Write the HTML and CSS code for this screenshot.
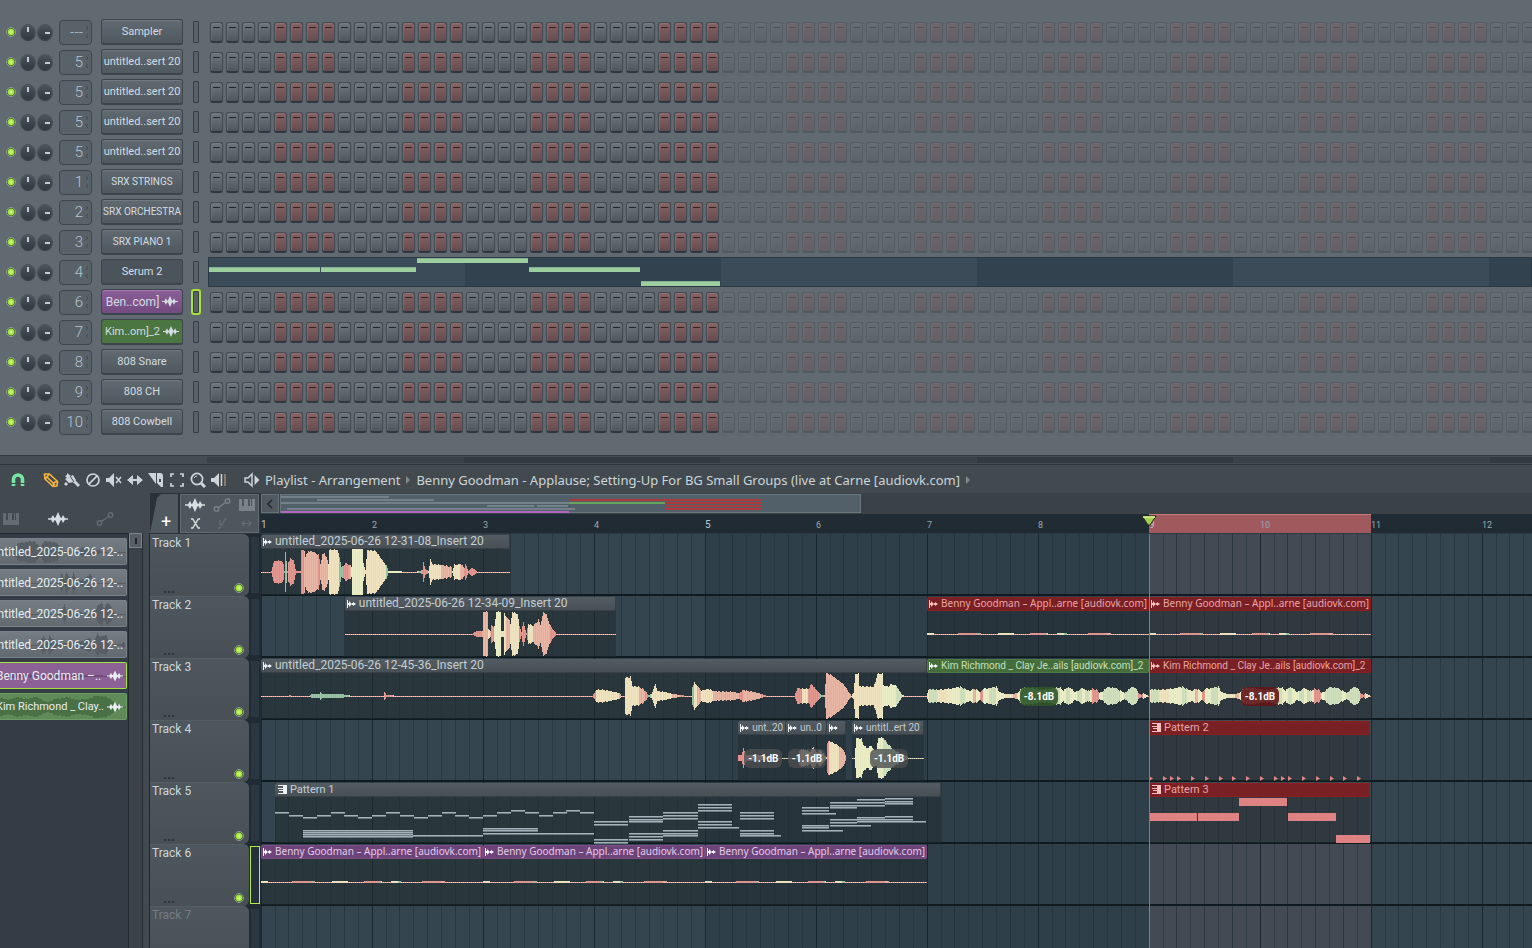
FILE: index.html
```html
<!DOCTYPE html>
<html lang="en">
<head>
    <meta charset="UTF-8">
    <meta name="viewport" content="width=device-width, initial-scale=1.0">
    <title>Playlist - Arrangement</title>
    <link rel="stylesheet" href="styles.css">
</head>
<body>

<svg class="symbols" xmlns="http://www.w3.org/2000/svg">
  <symbol id="i-wave" viewBox="0 0 20 14"><path d="M0 6.300h3l2-3.300 1.500 3 1-.500L10 0l2.500 5.500 1 .500L15 3l2 3.300h3v1.400h-3L15 11l-1.500-3-1 .500L10 14 7.500 8.500l-1-.500L5 11 3 7.700H0z" fill="currentColor"/></symbol>
  <symbol id="i-auto" viewBox="0 0 18 14"><g fill="none" stroke="currentColor" stroke-width="1.400"><circle cx="3.500" cy="11" r="2.300"/><circle cx="14.500" cy="3" r="2.300"/><path d="M5.500 9.500l7-5"/></g></symbol>
  <symbol id="i-keys" viewBox="0 0 16 12"><path d="M0 0h3v7h2V0h1v7h0V0h3v7h2V0h1v7h1V0h3v12H0z" fill="currentColor"/></symbol>
  <symbol id="i-magnet" viewBox="0 0 16 16"><path d="M3.500 14V7.500a4.500 4.500 0 0 1 9 0V14" fill="none" stroke="currentColor" stroke-width="3.600"/><path d="M1 11.500h5M10 11.500h5" stroke="#424a4f" stroke-width="1"/></symbol>
  <symbol id="i-pencil" viewBox="0 0 16 16"><g fill="none" stroke="currentColor" stroke-width="1.700" stroke-linejoin="round"><path d="M1.500 2l5 0 8 7.500-.5 4.500-4 .5L2 7z"/><path d="M2 7l4.500-5M4 5l8 8M10 14.500l1-4 3.500-1"/></g></symbol>
  <symbol id="i-brush" viewBox="0 0 16 16"><path d="M3 1l4 3 2-1 3 5-2 2-5 1-4-4 2-1-2-2 2-1z" fill="currentColor"/><path d="M10 9l5 5M3 11l-2 2" stroke="currentColor" stroke-width="3"/><path d="M6 4l4 6" stroke="#424a4f"/></symbol>
  <symbol id="i-no" viewBox="0 0 16 16"><g fill="none" stroke="currentColor" stroke-width="1.700"><circle cx="8" cy="8" r="6"/><path d="M3.800 12.200l8.400-8.400"/></g></symbol>
  <symbol id="i-mute" viewBox="0 0 16 16"><path d="M0 6h3l5-5v14L3 10H0z" fill="currentColor"/><path d="M10 5l5 6M15 5l-5 6" stroke="currentColor" stroke-width="1.500"/></symbol>
  <symbol id="i-slip" viewBox="0 0 16 16"><path d="M0 8l6-5v4h4V3l6 5-6 5V9H6v4z" fill="currentColor"/></symbol>
  <symbol id="i-slice" viewBox="0 0 16 16"><path d="M0 1h8v11z" fill="currentColor"/><path d="M9 1h3q3 0 3 3v11h-2L9 11z" fill="currentColor"/><path d="M12 7v3" stroke="#424a4f" stroke-width="2"/></symbol>
  <symbol id="i-select" viewBox="0 0 16 16"><path d="M2 5V2h3M11 2h3v3M14 11v3h-3M5 14H2v-3" fill="none" stroke="currentColor" stroke-width="1.700"/></symbol>
  <symbol id="i-zoom" viewBox="0 0 16 16"><g fill="none" stroke="currentColor" stroke-width="1.700"><circle cx="7" cy="7" r="5.600"/><path d="M11 11l4 4" stroke-width="3"/><path d="M4 6q1-2 3-2" stroke-width="1"/></g></symbol>
  <symbol id="i-scrub" viewBox="0 0 16 16"><path d="M0 6h3l5-5v14L3 10H0z" fill="currentColor"/><path d="M10.500 2v12" stroke="currentColor" stroke-width="1.500"/><path d="M14 2v12" stroke="#a98a7b" stroke-width="1.500"/></symbol>
  <symbol id="i-speaker" viewBox="0 0 16 16"><path d="M1 6h3l4-4v12l-4-4H1z" fill="none" stroke="currentColor" stroke-width="1.500"/><path d="M10.500 3l5 5-5 5z" fill="currentColor"/></symbol>
  <symbol id="i-cross" viewBox="0 0 12 12"><path d="M1 1h2l6 10h2M11 1H9L3 11H1" fill="none" stroke="currentColor" stroke-width="1.600"/></symbol>
  <symbol id="i-curve" viewBox="0 0 12 12"><path d="M1 11h2L9 1h2M3 2v5h4" fill="none" stroke="currentColor" stroke-width="1.200"/></symbol>
  <symbol id="i-stretch" viewBox="0 0 12 12"><path d="M4 3L1 6l3 3M8 3l3 3-3 3M2 6h8" fill="none" stroke="currentColor" stroke-width="1.200"/></symbol>
  <symbol id="i-clip" viewBox="0 0 9 8"><path d="M0 0h1v8H0zM1 3h1V1l3 3-3 3V5H1zM5 3h1V2l3 2-3 2V5H5z" fill="currentColor"/></symbol>
  <symbol id="i-pattern" viewBox="0 0 9 9"><path d="M0 0h9v9H0V8h5V6H1V5h4V4H0V3h5V1H0z" fill="currentColor"/></symbol>
</svg>

<div class="app">
  <section class="rack" id="rack"></section>
  <div class="rack-scroll"><i></i></div>

  <section class="playlist">
    <header class="toolbar">
      <button class="tool magnet" aria-label="Snap"><svg><use href="#i-magnet"/></svg></button>
      <span class="sep"></span>
      <button class="tool pencil" aria-label="Draw"><svg><use href="#i-pencil"/></svg></button>
      <button class="tool" aria-label="Paint"><svg><use href="#i-brush"/></svg></button>
      <button class="tool" aria-label="Delete"><svg><use href="#i-no"/></svg></button>
      <button class="tool" aria-label="Mute"><svg><use href="#i-mute"/></svg></button>
      <button class="tool" aria-label="Slip"><svg><use href="#i-slip"/></svg></button>
      <button class="tool" aria-label="Slice"><svg><use href="#i-slice"/></svg></button>
      <button class="tool" aria-label="Select"><svg><use href="#i-select"/></svg></button>
      <button class="tool" aria-label="Zoom"><svg><use href="#i-zoom"/></svg></button>
      <button class="tool" aria-label="Playback"><svg><use href="#i-scrub"/></svg></button>
      <span class="sep"></span>
      <button class="tool" aria-label="Preview"><svg><use href="#i-speaker"/></svg></button>
      <span class="crumb">Playlist - Arrangement</span>
      <span class="arrow"></span>
      <span class="crumb">Benny Goodman - Applause; Setting-Up For BG Small Groups (live at Carne [audiovk.com]</span>
      <span class="arrow"></span>
    </header>

    <div class="columns">
      <aside class="picker">
        <nav class="picker-tabs">
          <button aria-label="Patterns"><svg class="keys"><use href="#i-keys"/></svg></button>
          <button class="on" aria-label="Audio"><svg><use href="#i-wave"/></svg></button>
          <button aria-label="Automation"><svg><use href="#i-auto"/></svg></button>
        </nav>
        <div class="picker-body">
          <div class="picker-list" id="picker"></div>
          <div class="picker-scroll"><button aria-label="Scroll"><i></i></button></div>
        </div>
      </aside>

      <div class="heads">
        <div class="heads-top">
          <button class="add" aria-label="Add track">+</button>
          <div class="modes">
            <button class="on" aria-label="Audio clips"><svg><use href="#i-wave"/></svg></button>
            <button aria-label="Automation clips"><svg><use href="#i-auto"/></svg></button>
            <button aria-label="Pattern clips"><svg class="keys"><use href="#i-keys"/></svg></button>
            <button class="on" aria-label="Crossfade"><svg class="small"><use href="#i-cross"/></svg></button>
            <button class="off" aria-label="Curve"><svg class="small"><use href="#i-curve"/></svg></button>
            <button class="off" aria-label="Stretch"><svg class="small"><use href="#i-stretch"/></svg></button>
          </div>
        </div>
        <div id="heads"></div>
      </div>

      <div class="timeline">
        <div class="overview">
          <button class="back" aria-label="Back"><svg viewBox="0 0 8 10"><path d="M6 1L2 5l4 4" fill="none" stroke="currentColor" stroke-width="1.500"/></svg></button>
          <div class="minimap" id="minimap"></div>
        </div>
        <div class="ruler">
          <div class="range"></div>
          <div class="bars" id="bars"></div>
          <svg class="marker" viewBox="0 0 16 11"><path d="M1 1h14l-6 9H7z" fill="#a5cf52" stroke="#1c2a10"/><path d="M2 2h12" stroke="#dcf59a" stroke-width="1.500"/></svg>
        </div>
        <div class="lanes" id="lanes"></div>
      </div>
    </div>
  </section>
</div>

<script src="script.js"></script>
</body>
</html>
```

FILE: styles.css
```css
*{
  box-sizing:border-box;
}
body{
  margin:0;
  background:#424a4f;
  color:#d3dce2;
  font-family:Roboto,"Liberation Sans",sans-serif;
  font-size:11px;
  overflow:hidden;
}
button,input{
  margin:0;
  padding:0;
  border:0;
  background:none;
  color:inherit;
  font:inherit;
  appearance:none;
}
svg{
  display:block;
}
.symbols{
  display:none;
}
.app{
  --bar:111px;
  display:flex;
  flex-direction:column;
  height:100vh;
}

/* channel rack */
.rack{
  flex:none;
  padding:17px 0 18px;
  background:#626a71;
  overflow:hidden;
}
.channel{
  display:flex;
  align-items:center;
  height:30px;
  padding-left:6px;
}
.led{
  flex:none;
  width:10px;
  height:10px;
  border:1px solid #90999d;
  border-radius:50%;
  background:radial-gradient(circle,#c6f570 0 1px,#98dc35 3px,#2c4a18 4px);
}
.knob{
  flex:none;
  width:14px;
  height:15px;
  margin-left:5px;
  border-radius:50%;
  background:linear-gradient(#c4cbcf,#c4cbcf) 6px 2px/2px 5px no-repeat,linear-gradient(#4b545c,#30383f);
  box-shadow:0 1px 1px #353d44,0 0 0 1px #4c555c;
}
.knob::-webkit-slider-thumb{
  appearance:none;
  width:1px;
  height:1px;
  background:none;
}
.knob + .knob{
  margin-left:3px;
  background:linear-gradient(#c4cbcf,#c4cbcf) 7px 7px/5px 2px no-repeat,linear-gradient(#4b545c,#30383f);
}
.insert{
  display:flex;
  align-items:center;
  flex:none;
  width:33px;
  height:25px;
  margin-left:7px;
  border:1px solid #3d464c;
  border-radius:4px;
  background:#5a6269;
}
.insert input{
  width:23px;
  text-align:right;
  color:#b3c6d2;
  font-size:15px;
  font-weight:300;
}
.insert svg{
  margin-left:2px;
  width:4px;
  height:12px;
  color:#424a50;
}
.name{
  display:flex;
  align-items:center;
  justify-content:center;
  gap:3px;
  flex:none;
  width:82px;
  height:26px;
  margin-left:9px;
  border:1px solid #3c454b;
  border-bottom-width:2px;
  border-radius:3px;
  background:linear-gradient(#616a70,#50595f);
  box-shadow:inset 0 1px #717a80;
  white-space:nowrap;
  font-size:11px;
}
.name svg{
  width:16px;
  height:13px;
}
.name.long{
  font-size:10px;
}
.name.pressed{
  background:#4c545b;
  box-shadow:none;
}
.name.purple{
  background:linear-gradient(#8b5f97,#734b80);
  box-shadow:inset 0 1px #a77bb2;
  font-size:12px;
}
.name.green{
  background:#4b7541;
  box-shadow:none;
}
.pick{
  flex:none;
  width:6px;
  height:22px;
  margin:0 9px 0 10px;
  border:1px solid #363f46;
  border-radius:1px;
  background:#596168;
}
.pick.on{
  outline:2px solid #a6e237;
  outline-offset:0;
}
.steps{
  display:flex;
  flex:1;
  gap:3px;
  padding-left:2px;
  min-width:0;
  overflow:hidden;
}
.step{
  flex:none;
  width:13px;
  height:21px;
  border:1px solid #414a51;
  border-bottom:2px solid #2e373e;
  border-radius:3px;
  background:linear-gradient(#1e262b,#1e262b) 2px 4px/7px 1px no-repeat,linear-gradient(#6e777d,#4e575e);
  box-shadow:inset 1px 1px #79828777,0 0 1px #454e54;
}
.step.red{
  background:linear-gradient(#351f22,#351f22) 2px 4px/7px 1px no-repeat,linear-gradient(#886365,#654b4e);
  box-shadow:inset 1px 1px #a6797a77,0 0 1px #454e54;
}
.step.dim{
  opacity:.33;
}
.roll{
  flex:1;
  position:relative;
  height:30px;
  border:1px solid #2a3943;
  background:repeating-linear-gradient(90deg,#3b4b57 0 256px,#32434f 256px 512px);
}
.roll i{
  position:absolute;
  height:5px;
  background:#9ccea0;
  border-top:1px solid #86b38f;
}
.rack-scroll{
  flex:none;
  height:10px;
  padding:1px 0 2px 207px;
  border-top:1px solid #343b41;
  border-bottom:1px solid #2d3439;
  background:#464d52;
}
.rack-scroll i{
  display:block;
  height:6px;
  background:repeating-linear-gradient(90deg,#3a4147 0 257px,#333a40 257px 513px);
}

/* playlist */
.playlist{
  flex:1;
  display:flex;
  flex-direction:column;
  min-height:0;
}
.toolbar{
  display:flex;
  align-items:center;
  flex:none;
  height:28px;
  padding:2px 0 0 7px;
  background:#424a4f;
  white-space:nowrap;
}
.tool{
  display:flex;
  justify-content:center;
  flex:none;
  width:21px;
  color:#cdd5da;
}
.tool svg{
  width:16px;
  height:16px;
}
.magnet{
  color:#78e6a3;
}
.pencil{
  color:#f2b340;
}
.sep{
  flex:none;
  width:12px;
}
.crumb{
  padding-left:3px;
  font-family:"Noto Sans","Open Sans",sans-serif;
  font-size:13px;
  line-height:18px;
  color:#ccd5da;
}
.arrow{
  margin:0 3px 0 6px;
  border:4px solid transparent;
  border-left-color:#7e888e;
  border-right:0;
}
.columns{
  flex:1;
  display:grid;
  grid-template-columns:150px 111px minmax(0,1fr);
  grid-template-rows:minmax(0,1fr);
}
.picker,.heads,.timeline{
  display:flex;
  flex-direction:column;
  min-height:0;
  overflow:hidden;
}
.picker-tabs{
  display:flex;
  align-items:center;
  flex:none;
  gap:26px;
  height:40px;
  padding:12px 0 0 1px;
  color:#646c71;
}
.picker-tabs svg,.modes svg{
  width:20px;
  height:14px;
}
.picker-tabs .on,.modes .on{
  color:#d7dee2;
}
.picker-tabs .keys,.modes .keys{
  width:16px;
  height:12px;
}
.picker-tabs .keys{
  margin-left:2px;
}
.picker-tabs button{
  width:21px;
}
.picker-body{
  flex:1;
  display:flex;
  padding-right:6px;
  border-right:1px solid #20272c;
}
.picker-list{
  flex:1;
  display:flex;
  flex-direction:column;
  gap:4px;
  min-width:0;
  padding:4px 1px 0 0;
  background:#343d46;
  border-top:1px solid #20272c;
}
.sample{
  position:relative;
  display:flex;
  align-items:center;
  height:27px;
  padding:0 3px 0 0;
  border:1px solid #7a8389;
  border-left:0;
  border-radius:0 2px 2px 0;
  background:linear-gradient(#747d83,#626a70);
  color:#e9eef0;
  font-size:12px;
  white-space:nowrap;
  overflow:hidden;
}
.sample .wave{
  position:absolute;
  left:0;
  top:1px;
}
.sample span{
  position:relative;
  flex:1;
  margin-left:-9px;
}
.sample .icon{
  position:relative;
  flex:none;
  width:16px;
  height:14px;
}
.sample.purple{
  background:#8b6196;
  border-color:#a8e23c;
}
.sample.green{
  background:#5f8b59;
  border-color:#6f9b68;
}
.sample.purple span,.sample.green span{
  margin-left:-4px;
}
.sample.green span{
  font-size:11px;
}
.picker-scroll{
  width:15px;
  border-left:1px solid #252c31;
  border-right:1px solid #252c31;
  background:#3b4248;
}
.picker-scroll button{
  display:flex;
  align-items:center;
  justify-content:center;
  width:13px;
  height:15px;
  border:1px solid #7b848a;
  background:#565f65;
}
.picker-scroll i{
  width:2px;
  height:6px;
  background:#20272c;
}

.heads{
  background:#202b33;
}
.heads-top{
  display:flex;
  gap:2px;
  flex:none;
  height:41px;
  padding:1px 2px 1px 0;
  background:#2b3237;
}
.add{
  width:28px;
  padding-top:16px;
  padding-left:4px;
  background:#515a60;
  clip-path:polygon(11px 0,100% 0,100% 100%,0 100%,7px 4px);
  font-size:18px;
  line-height:20px;
  color:#fff;
}
.modes{
  flex:1;
  display:grid;
  grid-template-columns:28px 26px 1fr;
  border:1px solid #646d73;
  background:#4e575d;
  color:#798288;
}
.modes button{
  display:flex;
  align-items:center;
  justify-content:center;
}
.modes .small{
  width:11px;
  height:11px;
}
.modes .off{
  color:#636c72;
}
.track{
  display:flex;
  height:62px;
}
.head{
  display:grid;
  grid-template-columns:1fr auto;
  align-content:space-between;
  width:99px;
  padding:1px 5px 3px 2px;
  border-top:1px solid #555e64;
  border-radius:0 6px 6px 0;
  background:linear-gradient(#4e575d,#485056);
  font-size:12px;
  line-height:14px;
  color:#ccd5da;
}
.head b{
  grid-column:1/3;
  font-weight:400;
}
.head small{
  align-self:end;
  padding-left:11px;
  color:#2b3338;
  font-size:14px;
  font-weight:700;
  line-height:10px;
}
.head.off{
  color:#737c82;
}
.gutter{
  flex:1;
  margin:2px 1px;
  border:1px solid #202b33;
  background:#2a3740;
}
.gutter.on{
  border-color:#b4ea50;
  background:#25313a;
}

.overview{
  display:flex;
  flex:none;
  height:21px;
  padding:1px 0;
  background:#3a4147;
}
.back{
  width:18px;
  border:1px solid #69737a;
  background:#4f595f;
  color:#1f262b;
}
.back svg{
  width:8px;
  height:10px;
  margin:auto;
}
.minimap{
  position:relative;
  width:581px;
  margin-left:1px;
  border:1px solid #6a767e;
  background:#52606a;
}
.minimap i{
  position:absolute;
  height:2px;
  background:#75818a;
}
.minimap .red{
  background:#ac3a3c;
}
.minimap .green{
  background:#69a35b;
}
.minimap .purple{
  background:#b567c4;
}
.ruler{
  position:relative;
  flex:none;
  height:20px;
  background:linear-gradient(#212d36,#1f2a32);
  border-bottom:1px solid #2d3a43;
}
.bars{
  position:relative;
  display:flex;
  padding-top:4px;
}
.bars span{
  flex:none;
  width:var(--bar);
  font-size:9px;
  line-height:14px;
  color:#9aa8b2;
}
.bars .big{
  font-size:10px;
  color:#bcc8d0;
}
.range{
  position:absolute;
  top:0;
  bottom:0;
  left:calc(var(--bar)*8);
  width:calc(var(--bar)*2);
  border-top:1px solid #c9787b;
  background:#a0595d;
}
.marker{
  position:absolute;
  left:calc(var(--bar)*8 - 8px);
  top:1px;
  width:16px;
  height:11px;
}
.lanes{
  flex:1;
  position:relative;
  overflow:hidden;
  background:repeating-linear-gradient(90deg,#34454f 0 calc(var(--bar)*4),#2f3f4a calc(var(--bar)*4) calc(var(--bar)*8));
}
.lanes::before{
  content:"";
  position:absolute;
  top:0;
  bottom:0;
  left:calc(var(--bar)*8);
  width:calc(var(--bar)*2);
  background:#444a53;
}
.lane{
  position:relative;
  height:62px;
  border-bottom:2px solid #0f1a21;
  background:linear-gradient(90deg,#141f27cc 1px,transparent 1px 14px,#22303a88 14px 15px,transparent 15px 27px,#1d2a3399 27px 28px,transparent 28px 41px,#22303a88 41px 42px,transparent 42px 55px,#1d2a3399 55px 56px,transparent 56px 69px,#22303a88 69px 70px,transparent 70px 83px,#1d2a3399 83px 84px,transparent 84px 97px,#22303a88 97px 98px,transparent 98px) 0 0/var(--bar) 100%;
}
.playhead{
  position:absolute;
  top:0;
  bottom:0;
  left:calc(var(--bar)*8);
  width:1px;
  background:#71858f;
}
.clip{
  position:absolute;
  top:1px;
  bottom:-1px;
  left:calc(var(--at)*var(--bar));
  width:calc(var(--len)*var(--bar));
  background:#202b308c;
}
.clip header{
  display:flex;
  align-items:center;
  gap:3px;
  height:14px;
  padding:0 0 1px 2px;
  border-radius:2px;
  background:linear-gradient(#535c62,#474f55);
  box-shadow:inset -1px -1px #394147;
  color:#c5ced4;
  font-size:12px;
  line-height:13px;
  white-space:nowrap;
  overflow:hidden;
}
.clip header svg{
  flex:none;
  width:9px;
  height:8px;
  color:#eef3f5;
}
.clip.short header{
  font-size:11px;
}
.clip.narrow header{
  font-size:10px;
}
.clip.wide header{
  font-family:"Noto Sans","Open Sans",sans-serif;
  font-size:10px;
}
.clip.pattern header{
  padding-left:3px;
  font-size:11px;
}
.clip.pattern header svg{
  height:9px;
}
.clip.red header{
  background:#792024;
  box-shadow:inset 0 0 0 1px #8c1d21;
  color:#e9a5a5;
}
.clip.red header svg{
  color:#f6c0bd;
}
.clip.green header{
  background:#456d3c;
  box-shadow:inset 0 0 0 1px #4e7b43;
  color:#c5e0bd;
}
.clip.purple header{
  background:#6d4379;
  box-shadow:inset 0 0 0 1px #7b4d87;
  color:#e2cbe7;
}
.db{
  position:absolute;
  top:28px;
  width:38px;
  border-radius:6px;
  background:#4b4d50cc;
  font:bold 10px/19px Roboto,"Liberation Sans",sans-serif;
  text-align:center;
  color:#fff;
}
.green .db{
  background:#2f5529e6;
}
.red .db{
  background:#611619e6;
}
```

FILE: script.js
```js
const BAR = 111;

// name, insert number, button class
const channels = [
  ["Sampler", "---", ""],
  ["untitled..sert 20", 5, ""],
  ["untitled..sert 20", 5, ""],
  ["untitled..sert 20", 5, ""],
  ["untitled..sert 20", 5, ""],
  ["SRX STRINGS", 1, "long"],
  ["SRX ORCHESTRA", 2, "long"],
  ["SRX PIANO 1", 3, "long"],
  ["Serum 2", 4, "pressed"],
  ["Ben..com]", 6, "purple"],
  ["Kim..om]_2", 7, "green"],
  ["808 Snare", 8, ""],
  ["808 CH", 9, ""],
  ["808 Cowbell", 10, ""]
];

// left, width, top of the notes in the Serum 2 roll
const roll = [[0,111,9],[112,95,9],[208,111,0],[320,111,9],[432,79,23]];

const colours = {
  r:["#dd8c89","#e49a93","#d87f80"],
  p:["#e5ab9f","#e8b7a6","#dfa096"],
  c:["#eddcb8","#efe3bf","#e9cdae"],
  y:["#e6e9bf","#eaedc6","#e0e4b8"],
  g:["#8fb9a1","#9cc4a9","#86b09a"],
  l:["#c5dbb9","#d0e0bd","#b9d3b5"]
};

// each point is x,half height,colour until the next point
const waves = {
  a:"10,1,r 12,9,r 14,11,r 20,11,r 22,8,r 23,1,g 24,20,g 26,1,r 27,10,r 29,13,r 32,12,r 34,3,r 35,1,r 39,1,r 40,22,r 43,21,p 44,15,p 47,21,p 52,20,p 57,17,r 59,8,p 61,17,p 63,19,p 66,12,p 67,8,c 68,22,c 76,22,c 78,15,g 80,5,g 82,6,r 84,9,r 88,7,p 90,5,y 91,24,y 101,23,y 102,9,c 104,2,c 106,22,c 114,21,c 120,13,c 125,6,g 127,1,y 154,0,g 158,1,g 161,2,r 162,10,r 164,3,r 167,1,c 169,12,c 171,8,c 180,7,p 190,5,r 191,1,c 193,7,c 199,8,p 203,4,r 204,8,r 206,3,p 207,1,r 210,4,r 214,2,r 216,0,r",
  b:"127,0,r 129,2,r 133,3,r 137,3,p 138,22,p 142,22,p 143,5,c 145,3,p 146,9,r 149,7,y 151,22,y 155,22,y 156,3,c 158,3,c 159,21,c 161,16,p 164,14,p 165,9,c 167,22,c 172,20,c 174,8,r 176,2,r 178,12,r 180,4,r 181,1,r 183,10,c 188,8,p 193,14,p 195,9,p 198,22,p 201,19,p 205,8,r 209,3,r 211,0,r",
  c:"28,1,g 30,0,g 48,0,g 50,2,g 58,2,g 59,4,g 61,2,g 78,2,g 86,1,g 90,0,g 122,0,r 123,4,r 125,1,r 131,1,r 133,0,r 331,0,r 335,6,c 343,6,c 353,4,c 358,3,p 360,0,p 363,0,c 364,18,c 369,19,c 371,10,c 378,9,p 384,5,r 387,1,g 390,2,c 394,12,c 396,5,c 403,4,c 411,2,p 419,1,r 426,0,r 430,0,g 431,9,g 433,13,c 436,10,p 440,5,c 446,7,c 452,5,p 470,4,p 478,3,r 482,6,p 492,4,p 500,2,r 506,0,r 533,0,r 536,8,r 541,7,c 547,7,r 550,12,r 553,8,r 558,3,g 560,1,g 563,1,p 565,23,p 571,20,p 576,16,p 582,12,p 588,3,p 590,0,c 592,3,c 594,22,c 597,22,c 598,10,c 612,9,c 614,14,c 616,22,c 621,22,y 622,11,y 627,9,y 630,12,y 635,10,l 638,5,l 641,1,l 643,0,r",
  kim:"0,3,c 2,7,l 10,6,c 20,7,y 33,9,l 38,7,y 42,5,y 46,7,p 49,6,y 53,4,r 56,7,y 62,8,l 69,9,y 72,4,y 78,2,c 86,2,p 90,3,y 95,8,l 105,8,l 115,6,l 128,8,l 133,8,y 136,5,y 139,8,l 143,8,y 147,4,y 150,5,l 155,8,y 158,6,l 162,5,c 165,7,r 170,6,r 172,3,y 176,5,l 180,9,l 188,8,l 193,5,y 197,3,l 200,5,l 204,9,l 208,8,l 211,3,r 214,1,r 216,3,c 219,1,c 221,0,c",
  d:"0,3,r 3,3,r 5,9,r 8,3,p 20,3,c 30,1,c 40,0,c",
  e:"10,0,c 13,6,p 15,9,c 24,6,c 27,11,p 30,6,p 34,8,c 38,3,c 41,0,c",
  f:"0,15,r 2,17,c 8,14,c 12,11,p 16,8,p 19,1,p",
  h:"2,0,y 4,20,y 9,19,y 11,13,y 14,10,y 19,12,y 21,8,y 24,8,y 26,20,y 31,20,l 35,14,l 42,8,l 48,4,l 54,2,l 56,0,r",
  flat:"0,1,c 12,0,r 50,1,g 56,0,c 85,1,y 88,0,r 118,1,g 122,0,c 137,1,g 142,0,r 180,1,p 186,0,c 222,0,r"
};

function wave(points, width, mid, solid){
  const list = points.split(" ").map(p => p.split(","));
  const cols = {};
  const add = (colour, x, h) => cols[colour] = (cols[colour] || "") + "M" + x + ".5 " + (mid - h) + "v" + (h * 2 || 1);
  for(let x = 0; x < width; x++){
    const i = list.findIndex(p => +p[0] > x);
    let h = 0;
    let key = "crcycrg"[(x * 5 + (x >> 2)) % 7];
    if(i > 0){
      const a = list[i - 1], b = list[i];
      h = +a[1] + (b[1] - a[1]) * (x - a[0]) / (b[0] - a[0]);
      if(h > 0.5) key = a[2];
      h = Math.round(h + (h > 4 ? (x * 3 % 4) / 3 - 0.5 : 0));
    }
    add(solid || colours[key][(x * 7 + (x >> 1)) % 3], x, h);
  }
  const paths = Object.keys(cols).map(c => `<path d="${cols[c]}" stroke="${c}"/>`).join("");
  return `<svg class="wave" width="${width}" height="${mid * 2}">${paths}</svg>`;
}

// left, right and rows of the chords in Pattern 1
const chords = [
  [28,138,[33,35,37,39]],[138,208,[38]],[208,263,[31,33,36]],[263,319,[36]],
  [319,353,[24,27,42,45]],[354,388,[19,22,24,36,39,42]],[388,423,[15,18,21,33,36,38]],
  [423,457,[7,10,13,24,27]],[423,464,[30]],[465,499,[15,18,21,33,36]],[465,506,[38]],
  [527,554,[10,13]],[527,561,[16]],[527,554,[28,30]],[527,568,[33]],
  [555,582,[5,8,10,22,25]],[555,596,[28]],[582,610,[2,5,8,20,22,24]],
  [610,638,[1,4,6,19,22]],[610,651,[24]]
];
const melody = [15,18,20,18,15,18,20,18,15,18,20,18,15,18,20,18,15,13,15,18,15,13,15];

function rects(list, colour){
  return list.map(r => `<rect x="${r[0]}" y="${r[1]}" width="${r[2]}" height="${r[3]}" fill="${colour}"/>`).join("");
}

// a thin note has a bright line with a dim one under it
function thin(left, width, y){
  return rects([[left, y, width, 1]], "#a6b2b9") + rects([[left, y + 1, width, 1]], "#6e7b82");
}

function pattern(n){
  let out = "";
  if(n == 1){
    melody.forEach((y, i) => out += thin(Math.round(i * BAR / 8), 14, y));
    chords.forEach(c => c[2].forEach(y => out += thin(c[0], c[1] - c[0], y)));
  }
  else if(n == 2){
    [0,14,21,28,42,56,70,83,97,111,125,132,139,153,167,181,194,208].forEach(x => {
      out += `<path d="M${x} 41l4 2.500-4 2.500z" fill="#df8283"/>`;
    });
  }
  else{
    out = rects([[0,16,48,8],[49,16,41,8],[90,1,48,8],[139,16,48,8],[187,38,34,8]], "#df8283");
  }
  return `<svg width="100%" height="47">${out}</svg>`;
}

// at and len are in bars
const benny = "Benny Goodman – Appl..arne [audiovk.com]";
const kim = "Kim Richmond _ Clay Je..ails [audiovk.com]_2";
const tracks = [
  [{at:0, len:2.24, text:"untitled_2025-06-26 12-31-08_Insert 20", wave:"a"}],
  [{at:0.755, len:2.44, text:"untitled_2025-06-26 12-34-09_Insert 20", wave:"b"},
   {at:6, len:2, kind:"red wide", text:benny, wave:"flat"},
   {at:8, len:2, kind:"red wide", text:benny, wave:"flat"}],
  [{at:0, len:6, text:"untitled_2025-06-26 12-45-36_Insert 20", wave:"c"},
   {at:6, len:2, kind:"green narrow", text:kim, wave:"kim", db:"-8.1dB", dbx:93},
   {at:8, len:2, kind:"red narrow", text:kim, wave:"kim", db:"-8.1dB", dbx:92}],
  [{at:4.3, len:0.43, kind:"narrow", text:"unt..20", wave:"d", db:"-1.1dB", dbx:6},
   {at:4.73, len:0.37, kind:"narrow", text:"un..0", wave:"e", db:"-1.1dB", dbx:2},
   {at:5.1, len:0.17, text:"", wave:"f"},
   {at:5.325, len:0.65, kind:"narrow", text:"untitl..ert 20", wave:"h", db:"-1.1dB", dbx:18},
   {at:8, len:1.99, kind:"red pattern", text:"Pattern 2", pattern:2}],
  [{at:0.125, len:6, kind:"pattern", text:"Pattern 1", pattern:1},
   {at:8, len:1.99, kind:"red pattern", text:"Pattern 3", pattern:3}],
  [0, 2, 4].map(at => ({at:at, len:2, kind:"purple wide", text:benny, wave:"flat"})),
  []
];

const samples = [
  ["untitled_2025-06-26 12-..", "", "0,1,r 12,2,r 18,9,r 34,11,r 40,4,r 44,11,r 56,9,r 62,1,r 78,1,r 82,5,r 88,3,r 98,2,r 102,0,r"],
  ["untitled_2025-06-26 12-..", "", "58,0,r 61,9,r 64,4,r 66,11,r 70,3,r 73,10,r 77,2,r 83,4,r 90,9,r 94,1,r 96,0,r"],
  ["untitled_2025-06-26 12-..", "", "58,0,r 62,4,r 64,10,r 66,3,r 74,2,r 86,1,r 95,4,r 98,9,r 101,11,r 104,6,r 107,11,r 111,7,r 115,0,r"],
  ["untitled_2025-06-26 12-..", "", "38,0,r 43,9,r 47,4,r 49,9,r 56,2,r 80,3,r 88,7,r 93,3,r 97,11,r 101,8,r 106,10,r 109,1,r 121,1,r 123,3,r 125,0,r"],
  ["Benny Goodman –..", "purple", "0,1,r 20,2,r 40,1,r 60,2,r 100,1,r 105,0,r"],
  ["Kim Richmond _ Clay..", "green", "0,9,r 8,7,r 16,10,r 26,8,r 36,10,r 46,5,r 56,8,r 66,10,r 76,7,r 86,8,r 96,11,r 106,10,r 114,5,r 120,0,r"]
];

// Channel rack rows
document.getElementById("rack").innerHTML = channels.map((c, n) => {
  let right = "";
  if(c[0] == "Serum 2"){
    right = `<div class="roll">` + roll.map(r => `<i style="left:${r[0]}px;width:${r[1]}px;top:${r[2]}px"></i>`).join("") + `</div>`;
  }
  else{
    for(let i = 0; i < 120; i++){
      right += `<input type="checkbox" class="step${i % 8 > 3 ? " red" : ""}${i > 31 ? " dim" : ""}" aria-label="Step ${i + 1}">`;
    }
    right = `<div class="steps">${right}</div>`;
  }
  const icon = c[2] == "purple" || c[2] == "green" ? `<svg><use href="#i-wave"/></svg>` : "";
  return `<div class="channel">
    <input type="checkbox" class="led" checked aria-label="Channel ${n + 1} on">
    <input type="range" class="knob" aria-label="Pan">
    <input type="range" class="knob" aria-label="Volume">
    <label class="insert"><input type="text" value="${c[1]}" aria-label="Insert">
      <svg viewBox="0 0 4 12"><path d="M1 0l2 2-2 2M3 8l-2 2 2 2" fill="none" stroke="currentColor"/></svg></label>
    <button class="name ${c[2]}">${c[0]}${icon}</button>
    <button class="pick${c[1] == 6 ? " on" : ""}" aria-label="Select channel"></button>
    ${right}
  </div>`;
}).join("");

// Picker
document.getElementById("picker").innerHTML = samples.map(s => {
  const shade = s[1] == "purple" ? "#6f4b7a" : s[1] == "green" ? "#4a7046" : "#575f65";
  return `<div class="sample ${s[1]}">${wave(s[2], 126, 12, shade)}<span>${s[0]}</span>${s[1] ? `<svg class="icon"><use href="#i-wave"/></svg>` : ""}</div>`;
}).join("");

// Track headers
document.getElementById("heads").innerHTML = tracks.map((t, i) => `<div class="track">
  <div class="head${i == 6 ? " off" : ""}"><b>Track ${i + 1}</b><small>...</small>
  <input type="checkbox" class="led" checked aria-label="Track ${i + 1} on"></div>
  <div class="gutter${i == 5 ? " on" : ""}"></div>
</div>`).join("");

// Ruler
let bars = "";
for(let i = 1; i < 30; i++) bars += `<span class="${i % 4 == 1 ? "big" : ""}">${i}</span>`;
document.getElementById("bars").innerHTML = bars;

// Lanes and the minimap both come from the same clips
document.getElementById("lanes").innerHTML = tracks.map(t => `<div class="lane">` + t.map(c => {
  const body = c.pattern ? pattern(c.pattern) : wave(waves[c.wave], Math.round(c.len * BAR), 23);
  const db = c.db ? `<span class="db" style="left:${c.dbx}px">${c.db}</span>` : "";
  return `<article class="clip ${c.kind || ""}" style="--at:${c.at};--len:${c.len}">
    <header><svg><use href="#${c.pattern ? "i-pattern" : "i-clip"}"/></svg>${c.text}</header>
    ${body}${db}
  </article>`;
}).join("") + `</div>`).join("") + `<div class="playhead"></div>`;

document.getElementById("minimap").innerHTML = tracks.map((t, i) => t.map(c =>
  `<i class="${c.kind || ""}" style="left:${Math.round(c.at * 48)}px;width:${Math.round(c.len * 48)}px;top:${i * 3 + 1}px"></i>`
).join("")).join("");
```
